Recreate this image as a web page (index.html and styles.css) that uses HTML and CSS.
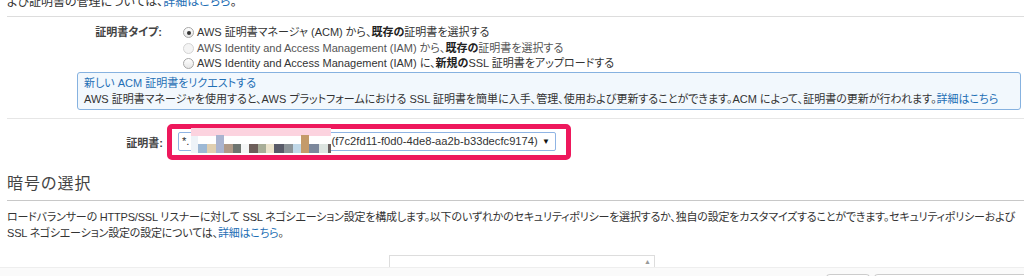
FILE: index.html
```html
<!DOCTYPE html>
<html lang="ja">
<head>
    <meta charset="UTF-8">
    <title>リスナーの設定</title>
    <link rel="stylesheet" href="styles.css">
</head>
<body>
    <div class="page">
        <p class="intro">よび証明書の管理については、<a href="#">詳細はこちら</a>。</p>

        <div class="section">
            <div class="row type-row">
                <div class="label">証明書タイプ:</div>
                <div class="options">
                    <div class="opt"><span class="radio checked"></span>AWS 証明書マネージャ (ACM) から、<b>既存の</b>証明書を選択する</div>
                    <div class="opt disabled"><span class="radio"></span>AWS Identity and Access Management (IAM) から、<b>既存の</b>証明書を選択する</div>
                    <div class="opt"><span class="radio"></span>AWS Identity and Access Management (IAM) に、<b>新規の</b>SSL 証明書をアップロードする</div>
                </div>
            </div>
            <div class="info">
                <a href="#">新しい ACM 証明書をリクエストする</a><br>
                AWS 証明書マネージャを使用すると、AWS プラットフォームにおける SSL 証明書を簡単に入手、管理、使用および更新することができます。ACM によって、証明書の更新が行われます。<a href="#">詳細はこちら</a>
            </div>
        </div>

        <div class="row cert-row">
            <div class="label">証明書:</div>
            <div class="highlight">
                <div class="select">
                    <span class="value">*.<span class="blur-gap"></span>(f7c2fd11-f0d0-4de8-aa2b-b33decfc9174)</span>
                    <span class="arrow">▼</span>
                    <!-- redacted domain -->
                    <svg class="mosaic" width="140" height="25" viewBox="0 0 140 25">
                        <rect x="0" y="0" width="140" height="8" fill="#fcd3df"/>
                        <rect x="0" y="8" width="7" height="17" fill="#eef3f8"/>
                        <rect x="7" y="16" width="9" height="9" fill="#9db8d4"/>
                        <rect x="16" y="16" width="9" height="9" fill="#e0cfb0"/>
                        <rect x="25" y="7" width="8" height="18" fill="#aab4d0"/>
                        <rect x="33" y="16" width="9" height="9" fill="#b09a88"/>
                        <rect x="42" y="16" width="8" height="9" fill="#6e7570"/>
                        <rect x="50" y="16" width="8" height="9" fill="#f4f6f6"/>
                        <rect x="58" y="16" width="9" height="9" fill="#6d5f5a"/>
                        <rect x="67" y="16" width="8" height="9" fill="#a8ae98"/>
                        <rect x="75" y="16" width="8" height="9" fill="#ece4cc"/>
                        <rect x="83" y="16" width="10" height="9" fill="#585a68"/>
                        <rect x="93" y="16" width="9" height="9" fill="#8c9498"/>
                        <rect x="102" y="16" width="8" height="9" fill="#c0d8e8"/>
                        <rect x="110" y="7" width="8" height="18" fill="#c49a6a"/>
                        <rect x="118" y="16" width="10" height="9" fill="#7c889c"/>
                        <rect x="128" y="16" width="9" height="9" fill="#dce4e0"/>
                        <rect x="137" y="16" width="3" height="9" fill="#6a6060"/>
                    </svg>
                </div>
            </div>
        </div>

        <h2 class="heading">暗号の選択</h2>
        <p class="desc">ロードバランサーの HTTPS/SSL リスナーに対して SSL ネゴシエーション設定を構成します。以下のいずれかのセキュリティポリシーを選択するか、独自の設定をカスタマイズすることができます。セキュリティポリシーおよび<br>SSL ネゴシエーション設定の設定については、<a href="#">詳細はこちら</a>。</p>

        <div class="bottom">
            <div class="listbox"><span class="arrow-up">▲</span></div>
        </div>
    </div>
    <div class="footer">
        <span class="btn small"></span>
        <span class="btn wide"></span>
    </div>
</body>
</html>
```

FILE: styles.css
```css
html, body {
    margin: 0;
    height: 276px;
    overflow: hidden;
    background-color: #fff;
}
body {
    font-family: "Liberation Sans", "Noto Sans CJK JP", sans-serif;
    font-size: 11px;
    font-feature-settings: "palt";
    color: #333;
}
a {
    color: #1f6fb5;
    text-decoration: none;
}
.page {
    padding-left: 7px;
}
.intro {
    margin: -6px 0 0;
    line-height: 16px;
    padding-bottom: 6px;
    border-bottom: 1px solid #ddd;
    font-size: 12px;
}
.section {
    padding-top: 8px;
}
.row {
    display: flex;
}
.label {
    width: 155px;
    text-align: right;
    font-weight: bold;
    color: #444;
}
.type-row .label {
    line-height: 15.5px;
}
.options {
    margin-left: 21px;
}
.opt {
    line-height: 15.5px;
    display: flex;
    align-items: center;
    white-space: nowrap;
}
.opt b {
    color: #222;
}
.opt.disabled {
    color: #555;
}
.radio {
    width: 9px;
    height: 9px;
    border: 1px solid #a8a8a8;
    border-radius: 50%;
    background: linear-gradient(#fff, #e6e6e6);
    margin-right: 3px;
    position: relative;
    flex-shrink: 0;
}
.radio.checked::after {
    content: "";
    position: absolute;
    left: 2.5px;
    top: 2.5px;
    width: 4px;
    height: 4px;
    border-radius: 50%;
    background: #333;
}
.disabled .radio {
    border-color: #d4d4d4;
    background: #f4f4f4;
}
.info {
    margin: 0 3px 0 70px;
    padding: 2px 6px;
    line-height: 16px;
    border: 1px solid #86b2e0;
    border-radius: 3px;
    background-color: #f2f8fd;
    white-space: nowrap;
    overflow: hidden;
}
.cert-row {
    margin-top: 8px;
    border-top: 1px solid #e6e6e6;
    padding-top: 5px;
    align-items: center;
}
.cert-row .label {
    width: 156px;
    margin-right: 4px;
}
.highlight {
    flex-shrink: 0;
    width: 378px;
    border: 5px solid #ee185c;
    border-radius: 5px;
    padding: 3px 10px 0 6px;
    height: 23px;
}
.select {
    position: relative;
    height: 17px;
    border: 1px solid #8fb4e4;
    border-radius: 2px;
    display: flex;
    align-items: center;
    justify-content: space-between;
    padding: 0 5px 0 3px;
    line-height: 17px;
    font-size: 11.2px;
    white-space: nowrap;
    background: #fff;
}
.blur-gap {
    display: inline-block;
    width: 142px;
}
.arrow {
    font-size: 8px;
    color: #111;
}
.mosaic {
    position: absolute;
    left: 12px;
    top: -5px;
}
.heading {
    margin: 12px 0 0;
    font-size: 16px;
    font-weight: normal;
    color: #444;
    line-height: 24px;
    letter-spacing: 1px;
    padding-bottom: 4px;
    border-bottom: 1px solid #c8c8c8;
}
.desc {
    margin: 8px 0 0;
    line-height: 16px;
    white-space: nowrap;
    letter-spacing: -0.2px;
}
.bottom {
    margin-top: 14px;
    padding-left: 382px;
}
.listbox {
    width: 264px;
    height: 11px;
    border: 1px solid #ddd;
    border-bottom: none;
    position: relative;
}
.arrow-up {
    position: absolute;
    right: 3px;
    top: 2px;
    font-size: 7px;
    color: #999;
}
.footer {
    display: flex;
    justify-content: flex-end;
    gap: 4px;
    padding-top: 6px;
    border-top: 1px solid #eee;
    background: #fafafa;
}
.btn {
    height: 10px;
    border: 1px solid #ccc;
    border-bottom: none;
    border-radius: 4px 4px 0 0;
    background: #fff;
}
.btn.small {
    width: 42px;
}
.btn.wide {
    width: 152px;
    margin-right: -4px;
}
```
